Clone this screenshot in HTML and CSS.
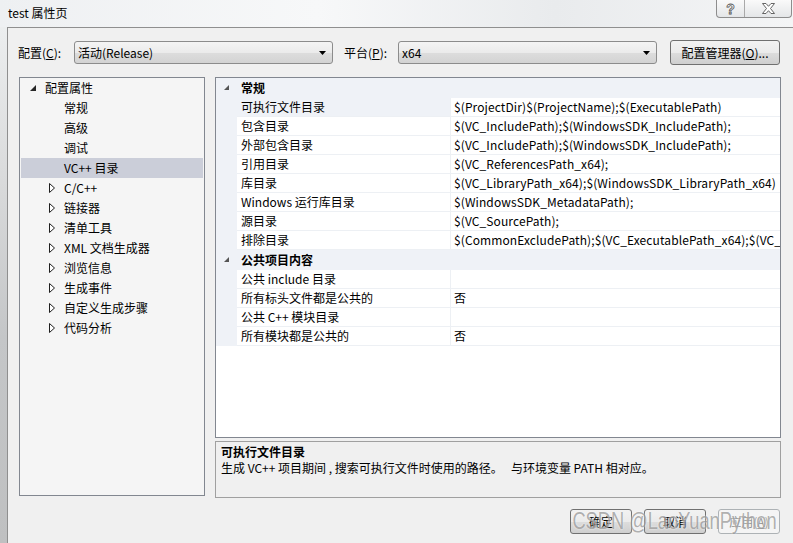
FILE: index.html
```html
<!DOCTYPE html>
<html lang="zh-CN">
<head>
    <meta charset="UTF-8">
    <title>test 属性页</title>
    <link rel="stylesheet" href="styles.css">
</head>
<body>
    <div class="titlebar">
        <span class="title">test 属性页</span>
        <div class="caption-btns">
            <span class="cap-help">?</span>
            <span class="cap-close">
                <svg width="13" height="11" viewBox="0 0 13 11"><polygon points="0.5,0.5 4,0.5 6.5,3.3 9,0.5 12.5,0.5 8.5,5.5 12.5,10.5 9,10.5 6.5,7.7 4,10.5 0.5,10.5 4.5,5.5" fill="#fff" stroke="#555" stroke-width="0.9"/></svg>
            </span>
        </div>
    </div>
    <div class="frame">
        <div class="frame-edge"></div>
        <div class="client">
            <div class="toolbar">
                <span class="label lbl-config">配置(<u>C</u>):</span>
                <div class="combo"><span>活动(Release)</span><svg width="7" height="4" viewBox="0 0 7 4"><polygon points="0,0 7,0 3.5,4" fill="#000"/></svg></div>
                <span class="label lbl-platform">平台(<u>P</u>):</span>
                <div class="combo"><span>x64</span><svg width="7" height="4" viewBox="0 0 7 4"><polygon points="0,0 7,0 3.5,4" fill="#000"/></svg></div>
                <button class="btn btn-manager">配置管理器(<u>O</u>)...</button>
            </div>
            <div class="main">
                <div class="tree">
                    <div class="node lvl0"><span class="tog"><svg width="6" height="6" viewBox="0 0 6 6"><polygon points="6,0 6,6 0,6" fill="#262626"/></svg></span>配置属性</div>
                    <div class="node lvl1"><span class="tog"></span>常规</div>
                    <div class="node lvl1"><span class="tog"></span>高级</div>
                    <div class="node lvl1"><span class="tog"></span>调试</div>
                    <div class="node lvl1 selected"><span class="tog"></span>VC++ 目录</div>
                    <div class="node lvl1"><span class="tog"><svg width="6" height="10" viewBox="0 0 6 10"><polygon points="0.5,0.5 5.5,5 0.5,9.5" fill="#fff" stroke="#1e1e1e"/></svg></span>C/C++</div>
                    <div class="node lvl1"><span class="tog"><svg width="6" height="10" viewBox="0 0 6 10"><polygon points="0.5,0.5 5.5,5 0.5,9.5" fill="#fff" stroke="#1e1e1e"/></svg></span>链接器</div>
                    <div class="node lvl1"><span class="tog"><svg width="6" height="10" viewBox="0 0 6 10"><polygon points="0.5,0.5 5.5,5 0.5,9.5" fill="#fff" stroke="#1e1e1e"/></svg></span>清单工具</div>
                    <div class="node lvl1"><span class="tog"><svg width="6" height="10" viewBox="0 0 6 10"><polygon points="0.5,0.5 5.5,5 0.5,9.5" fill="#fff" stroke="#1e1e1e"/></svg></span>XML 文档生成器</div>
                    <div class="node lvl1"><span class="tog"><svg width="6" height="10" viewBox="0 0 6 10"><polygon points="0.5,0.5 5.5,5 0.5,9.5" fill="#fff" stroke="#1e1e1e"/></svg></span>浏览信息</div>
                    <div class="node lvl1"><span class="tog"><svg width="6" height="10" viewBox="0 0 6 10"><polygon points="0.5,0.5 5.5,5 0.5,9.5" fill="#fff" stroke="#1e1e1e"/></svg></span>生成事件</div>
                    <div class="node lvl1"><span class="tog"><svg width="6" height="10" viewBox="0 0 6 10"><polygon points="0.5,0.5 5.5,5 0.5,9.5" fill="#fff" stroke="#1e1e1e"/></svg></span>自定义生成步骤</div>
                    <div class="node lvl1"><span class="tog"><svg width="6" height="10" viewBox="0 0 6 10"><polygon points="0.5,0.5 5.5,5 0.5,9.5" fill="#fff" stroke="#1e1e1e"/></svg></span>代码分析</div>
                </div>
                <div class="right">
                    <div class="grid">
                        <div class="cat"><span class="cat-tog"><svg width="5" height="5" viewBox="0 0 5 5"><polygon points="5,0 5,5 0,5" fill="#555"/></svg></span>常规</div>
                        <div class="row sel"><span class="gutter"></span><span class="name">可执行文件目录</span><span class="val">$(ProjectDir)$(ProjectName);$(ExecutablePath)</span></div>
                        <div class="row"><span class="gutter"></span><span class="name">包含目录</span><span class="val">$(VC_IncludePath);$(WindowsSDK_IncludePath);</span></div>
                        <div class="row"><span class="gutter"></span><span class="name">外部包含目录</span><span class="val">$(VC_IncludePath);$(WindowsSDK_IncludePath);</span></div>
                        <div class="row"><span class="gutter"></span><span class="name">引用目录</span><span class="val">$(VC_ReferencesPath_x64);</span></div>
                        <div class="row"><span class="gutter"></span><span class="name">库目录</span><span class="val">$(VC_LibraryPath_x64);$(WindowsSDK_LibraryPath_x64)</span></div>
                        <div class="row"><span class="gutter"></span><span class="name">Windows 运行库目录</span><span class="val">$(WindowsSDK_MetadataPath);</span></div>
                        <div class="row"><span class="gutter"></span><span class="name">源目录</span><span class="val">$(VC_SourcePath);</span></div>
                        <div class="row"><span class="gutter"></span><span class="name">排除目录</span><span class="val">$(CommonExcludePath);$(VC_ExecutablePath_x64);$(VC_LibraryPath_x64)</span></div>
                        <div class="cat"><span class="cat-tog"><svg width="5" height="5" viewBox="0 0 5 5"><polygon points="5,0 5,5 0,5" fill="#555"/></svg></span>公共项目内容</div>
                        <div class="row"><span class="gutter"></span><span class="name">公共 include 目录</span><span class="val"></span></div>
                        <div class="row"><span class="gutter"></span><span class="name">所有标头文件都是公共的</span><span class="val">否</span></div>
                        <div class="row"><span class="gutter"></span><span class="name">公共 C++ 模块目录</span><span class="val"></span></div>
                        <div class="row"><span class="gutter"></span><span class="name">所有模块都是公共的</span><span class="val">否</span></div>
                    </div>
                    <div class="desc">
                        <div class="desc-title">可执行文件目录</div>
                        <div class="desc-text">生成 VC++ 项目期间 , 搜索可执行文件时使用的路径。&nbsp;&nbsp; 与环境变量 PATH 相对应。</div>
                    </div>
                </div>
            </div>
            <div class="footer">
                <button class="btn">确定</button>
                <button class="btn">取消</button>
                <button class="btn" disabled>应用(<u>A</u>)</button>
                <span class="watermark">CSDN @LaoYuanPython</span>
            </div>
        </div>
    </div>
</body>
</html>
```

FILE: styles.css
```css
body {
    margin: 0;
    width: 793px;
    height: 543px;
    overflow: hidden;
    font-family: "Noto Sans CJK SC", sans-serif;
    font-size: 12px;
    color: #000;
    background: linear-gradient(90deg, #eef0f2 0%, #f7f8f9 40%, #e9ebed 70%, #f4f5f6 100%);
}
.titlebar {
    height: 27px;
    display: flex;
    justify-content: space-between;
    align-items: flex-start;
}
.title {
    padding-left: 8px;
    line-height: 26px;
}
.caption-btns {
    display: flex;
    margin-right: 1px;
    border: 1px solid #8d8d8d;
    border-top: none;
    border-radius: 0 0 4px 4px;
    overflow: hidden;
    background: linear-gradient(#fafafa, #e4e6e8);
}
.cap-help, .cap-close {
    height: 17px;
    display: flex;
    align-items: center;
    justify-content: center;
}
.cap-help {
    width: 27px;
    border-right: 1px solid #a9a9a9;
    font-family: "Liberation Sans", sans-serif;
    font-size: 14px;
    font-weight: bold;
    color: #fff;
    -webkit-text-stroke: 0.8px #555;
}
.cap-close {
    width: 46px;
}
.frame {
    display: flex;
    height: 516px;
}
.frame-edge {
    width: 7px;
    background: linear-gradient(#eceeef, #d9dadb 30%, #c4c6c8 60%, #bfc0c1);
}
.client {
    flex: 1;
    border-left: 1px solid #8f8f8f;
    border-top: 1px solid #8f8f8f;
    background: #f0f0f0;
    padding: 12px 12px 0 10px;
}
.toolbar {
    height: 25px;
    display: flex;
    align-items: center;
}
.label {
    line-height: 16px;
}
.lbl-config {
    width: 56px;
}
.lbl-platform {
    width: 54px;
    margin-left: 11px;
}
.combo {
    width: 259px;
    height: 23px;
    box-sizing: border-box;
    border: 1px solid #8c8c8c;
    border-radius: 3px;
    background: linear-gradient(#f4f4f4 0%, #ebebeb 50%, #dddddd 51%, #d3d3d3 100%);
    display: flex;
    align-items: center;
    justify-content: space-between;
    padding: 0 6px 0 3px;
}
.btn {
    font: inherit;
    color: #000;
    height: 25px;
    box-sizing: border-box;
    border: 1px solid #707070;
    border-radius: 3px;
    background: linear-gradient(#f2f2f2 0%, #ebebeb 50%, #dddddd 51%, #cfcfcf 100%);
    padding: 0;
}
.btn-manager {
    width: 110px;
    margin-left: 13px;
}
.main {
    display: flex;
    gap: 10px;
    margin-top: 12px;
}
.tree {
    width: 186px;
    height: 419px;
    box-sizing: border-box;
    margin-left: 1px;
    border: 1px solid #828790;
    background: #f5f5f5;
}
.node {
    height: 20px;
    line-height: 20px;
    display: flex;
    align-items: center;
    white-space: nowrap;
}
.tog {
    width: 15px;
    display: flex;
    align-items: center;
}
.lvl0 {
    padding-left: 10px;
}
.lvl1 {
    padding-left: 29px;
}
.selected {
    background: #cbced9;
    margin: 0 1px;
    padding-left: 28px;
}
.right {
    flex: 1;
    display: flex;
    flex-direction: column;
    gap: 3px;
}
.grid {
    height: 361px;
    box-sizing: border-box;
    border: 1px solid #828790;
    background: #fff;
    overflow: hidden;
}
.cat {
    height: 20px;
    line-height: 20px;
    background: #eff2f7;
    font-weight: bold;
    display: flex;
    align-items: center;
    border-bottom: 1px solid #eff2f7;
    box-sizing: border-box;
}
.cat-tog {
    width: 25px;
    padding-left: 8px;
    box-sizing: border-box;
    display: flex;
    align-items: center;
}
.row {
    height: 19px;
    display: grid;
    grid-template-columns: 21px 214px 1fr;
    white-space: nowrap;
}
.gutter {
    background: #eff2f7;
}
.name, .val {
    line-height: 18px;
    border-bottom: 1px solid #edf0f4;
    overflow: hidden;
}
.name {
    padding-left: 4px;
    border-right: 1px solid #edf0f4;
}
.val {
    padding-left: 3px;
    letter-spacing: 0.1px;
}
.row.sel .name {
    background: #eff2f7;
}
.desc {
    height: 57px;
    box-sizing: border-box;
    border: 1px solid #a0a0a0;
    padding: 2px 5px;
    line-height: 16px;
}
.desc-title {
    font-weight: bold;
}
.desc-text {
    white-space: pre-wrap;
}
.footer {
    position: relative;
    margin-top: 11px;
    display: flex;
    justify-content: flex-end;
    gap: 12px;
    padding-right: 1px;
}
.footer .btn {
    width: 62px;
}
.footer .btn:disabled {
    color: #8d8d8d;
    border-color: #adb2b5;
    background: #f4f4f4;
}
.watermark {
    position: absolute;
    right: 4px;
    top: -2px;
    font-family: "Liberation Sans", sans-serif;
    font-size: 24px;
    color: rgba(110, 110, 110, 0.55);
    text-shadow: 0 0 2px rgba(255, 255, 255, 0.9);
    transform: scaleX(0.76);
    transform-origin: right center;
    white-space: nowrap;
    pointer-events: none;
}
```
